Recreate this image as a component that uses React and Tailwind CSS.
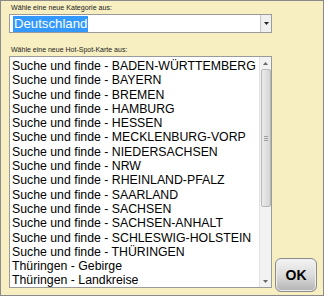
const ITEMS = [
  "Suche und finde - BADEN-WÜRTTEMBERG",
  "Suche und finde - BAYERN",
  "Suche und finde - BREMEN",
  "Suche und finde - HAMBURG",
  "Suche und finde - HESSEN",
  "Suche und finde - MECKLENBURG-VORP",
  "Suche und finde - NIEDERSACHSEN",
  "Suche und finde - NRW",
  "Suche und finde - RHEINLAND-PFALZ",
  "Suche und finde - SAARLAND",
  "Suche und finde - SACHSEN",
  "Suche und finde - SACHSEN-ANHALT",
  "Suche und finde - SCHLESWIG-HOLSTEIN",
  "Suche und finde - THÜRINGEN",
  "Thüringen - Gebirge",
  "Thüringen - Landkreise",
];

export default function App() {
  return (
    <div
      className="w-[324px] h-[296px] bg-[#f7efc2] border border-[#8a8a8a] flex flex-col pl-[8px] pt-[3px] overflow-hidden"
      style={{ fontFamily: '"Liberation Sans", Arial, sans-serif' }}
    >
      <span className="text-[7.1px] leading-[9px] text-[#222] ml-[2px]">
        Wähle eine neue Kategorie aus:
      </span>
      <div className="mt-[1px] w-[263px] h-[19px] bg-white border border-[#9a9a9a] flex items-center">
        <span className="ml-[3px] px-[1px] bg-[#3399ff] text-white text-[13.2px] leading-[16px]">
          Deutschland
        </span>
        <div className="ml-auto w-[11px] h-[17px] border-l border-[#c8c8c8] bg-[#f0f0f0] flex items-center justify-center">
          <svg width="5" height="3" viewBox="0 0 5 3">
            <path d="M0 0h5L2.5 3z" fill="#222" />
          </svg>
        </div>
      </div>
      <span className="mt-[12px] text-[7px] leading-[9px] text-[#222] ml-[2px]">
        Wähle eine neue Hot-Spot-Karte aus:
      </span>
      <div className="mt-[2px] flex items-end gap-[3px]">
        <div className="w-[263px] h-[232px] bg-white border border-[#9a9a9a] flex overflow-hidden">
          <div className="flex-1 flex flex-col pl-[2px] pt-[2px] text-[12.3px] leading-[14.3px] text-black whitespace-nowrap overflow-hidden">
            {ITEMS.map((t) => (
              <span key={t}>{t}</span>
            ))}
          </div>
          <div className="w-[12px] bg-[#f2f2f2] border-l border-[#e2e2e2] flex flex-col items-center">
            <div className="h-[12px] flex items-center justify-center">
              <svg width="5" height="3" viewBox="0 0 5 3">
                <path d="M0 3h5L2.5 0z" fill="#666" />
              </svg>
            </div>
            <div className="w-[10px] h-[138px] bg-gradient-to-r from-[#ececec] to-[#d4d4d4] border border-[#b8b8b8] rounded-[2px] flex items-center justify-center">
              <div className="flex flex-col gap-[1px]">
                <div className="w-[4px] h-px bg-[#a0a0a0]" />
                <div className="w-[4px] h-px bg-[#a0a0a0]" />
                <div className="w-[4px] h-px bg-[#a0a0a0]" />
              </div>
            </div>
            <div className="mt-auto h-[12px] flex items-center justify-center">
              <svg width="5" height="3" viewBox="0 0 5 3">
                <path d="M0 0h5L2.5 3z" fill="#666" />
              </svg>
            </div>
          </div>
        </div>
        <button className="mb-[-4px] w-[42px] h-[34px] rounded-[6px] border border-[#8a8a8a] bg-gradient-to-b from-[#f4f4f4] via-[#dcdcdc] to-[#b4b4b4] shadow-[inset_0_0_0_1px_#eee] text-[14px] font-bold text-black">
          OK
        </button>
      </div>
    </div>
  );
}
